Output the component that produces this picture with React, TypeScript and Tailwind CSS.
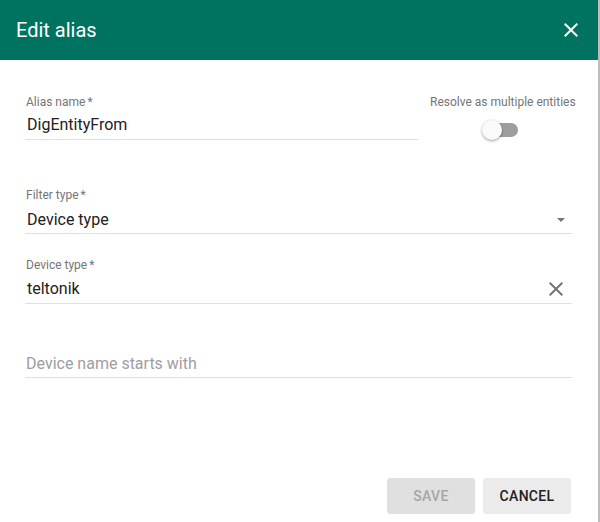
import React from "react";

const font = { fontFamily: "Roboto, 'Liberation Sans', sans-serif" };

function CloseIcon({ className }: { className?: string }) {
  return (
    <svg viewBox="0 0 24 24" className={className} fill="currentColor">
      <path d="M19 6.41L17.59 5 12 10.59 6.41 5 5 6.41 10.59 12 5 17.59 6.41 19 12 13.41 17.59 19 19 17.59 13.41 12z" />
    </svg>
  );
}

function Label({ text }: { text: string }) {
  return (
    <div className="h-[16px] pl-[1px] text-[12px] leading-[16px] text-[#757575]">
      {text}
      <span className="ml-[2px]">*</span>
    </div>
  );
}

export default function App() {
  return (
    <div className="w-[600px] h-[522px] bg-[#bdbdbd] flex" style={font}>
      <div className="w-[598px] h-full bg-white flex flex-col">
        {/* header */}
        <div className="h-[60px] shrink-0 bg-[#007360] flex items-center justify-between pl-[16px] pr-[15px] text-white">
          <span className="text-[20px] leading-[28px]">Edit alias</span>
          <CloseIcon className="w-[24px] h-[24px] mt-[-1px]" />
        </div>

        {/* form */}
        <div className="flex-1 flex flex-col pl-[25px] pr-[26px] pt-[34px]">
          <div className="flex">
            <div className="w-[393px] shrink-0">
              <Label text="Alias name" />
              <div className="mt-[3px] pb-[2px] pl-[2px] border-b border-[#e0e0e0] text-[16px] leading-[24px] text-[#212121]">
                DigEntityFrom
              </div>
            </div>
            <div className="ml-[12px] shrink-0 flex flex-col items-center">
              <div className="h-[16px] text-[12px] leading-[16px] text-[#757575] whitespace-nowrap">
                Resolve as multiple entities
              </div>
              <div className="relative mt-[10px] mr-[6px] w-[36px] h-[20px] flex items-center">
                <div className="ml-[2px] w-[34px] h-[14px] rounded-full bg-[#9e9e9e]" />
                <div className="absolute left-0 top-0 w-[20px] h-[20px] rounded-full bg-[#fafafa] shadow-[0_1px_3px_rgba(0,0,0,0.4)]" />
              </div>
            </div>
          </div>

          <div className="mt-[47px]">
            <Label text="Filter type" />
            <div className="mt-[5px] pb-[1px] pl-[2px] border-b border-[#e0e0e0] flex items-center justify-between text-[16px] leading-[24px] text-[#212121]">
              <span>Device type</span>
              <span className="mr-[7px] w-0 h-0 border-l-[4px] border-r-[4px] border-t-[4px] border-l-transparent border-r-transparent border-t-[#757575]" />
            </div>
          </div>

          <div className="mt-[23px]">
            <Label text="Device type" />
            <div className="mt-[4px] pb-[2px] pl-[2px] border-b border-[#e0e0e0] flex items-center justify-between text-[16px] leading-[24px] text-[#212121]">
              <span>teltonik</span>
              <CloseIcon className="w-[24px] h-[24px] mr-[4px] text-[#757575]" />
            </div>
          </div>

          <div className="mt-[48px]">
            <div className="pb-[1px] pl-[1px] border-b border-[#e0e0e0] text-[16px] leading-[24px] text-[#9e9e9e]">
              Device name starts with
            </div>
          </div>

          <div className="mt-auto mb-[8px] flex justify-end gap-[8px] pr-[1px]">
            <button className="w-[88px] h-[36px] rounded-[3px] bg-[#e0e0e0] text-[14px] font-medium text-[#a6a6a6] tracking-[0.3px]">
              SAVE
            </button>
            <button className="w-[88px] h-[36px] rounded-[3px] bg-[#ebebeb] text-[14px] font-medium text-[#212121] tracking-[0.3px]">
              CANCEL
            </button>
          </div>
        </div>
      </div>
    </div>
  );
}
